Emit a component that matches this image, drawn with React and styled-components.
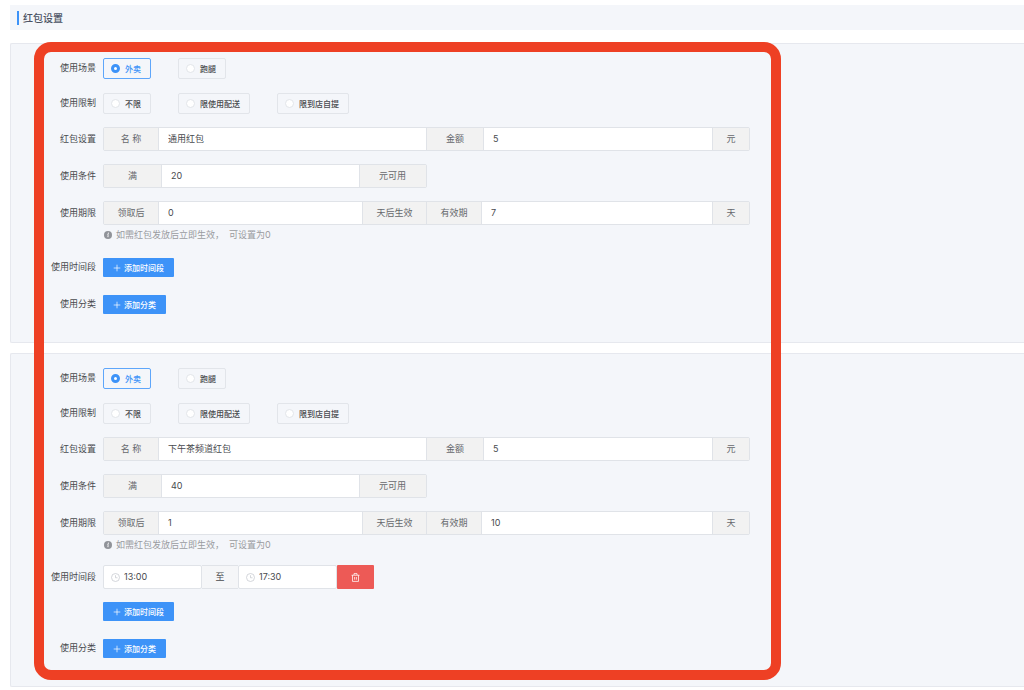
import React, { useId } from "react";
import styled, { createGlobalStyle } from "styled-components";

const GlobalStyle = createGlobalStyle`
    * {
        box-sizing: border-box;
    }
    body {
        margin: 0;
        background-color: #fff;
        color: #484a4e;
        font-family: Inter, "Noto Sans CJK SC", sans-serif;
        font-size: 9px;
        line-height: 14px;
    }
    input,
    button {
        font-family: inherit;
    }
`;

const Page = styled.main`
    padding: 5px 0 3px 10px;
`;

const TitleBar = styled.header`
    display: flex;
    align-items: center;
    height: 25px;
    margin-bottom: 13px;
    padding-left: 7px;
    background-color: #f4f6fa;
`;

const Title = styled.h1`
    margin: 0;
    padding-left: 4px;
    border-left: 2px solid #3d93f8;
    color: #4b5263;
    font-size: 10px;
    font-weight: 500;
    line-height: 14px;
`;

const Cards = styled.div`
    position: relative;
    display: flex;
    flex-direction: column;
    gap: 10px;
`;

const Highlight = styled.div`
    position: absolute;
    top: -1px;
    bottom: 7px;
    left: 24px;
    width: 747px;
    border: 10px solid #ee4024;
    border-radius: 17px;
    pointer-events: none;
`;

const Card = styled.section`
    display: flex;
    flex-direction: column;
    gap: 13px;
    padding: 13px 0 26px;
    border: 1px solid #e6e8ee;
    border-right: 0;
    border-radius: 2px 0 0 2px;
    background-color: #f4f6fa;
`;

const Row = styled.div`
    display: flex;
    gap: 7px;
`;

const RowLabel = styled.span`
    width: 85px;
    flex-shrink: 0;
    text-align: right;
    line-height: ${(props) => props.$height || 24}px;
`;

const RowContent = styled.div`
    flex: 1;
    max-width: 647px;
`;

const Chips = styled.div`
    display: flex;
    gap: 27px;
    padding-top: 1px;
`;

const Chip = styled.label`
    display: flex;
    align-items: center;
    gap: 5px;
    height: 21px;
    padding: 0 9px 0 7px;
    border: 1px solid #e2e5ea;
    border-radius: 2px;
    font-size: 8px;
    font-weight: 500;
    white-space: nowrap;
    cursor: pointer;
    &:has(input:checked) {
        border-color: #5ea6fa;
        color: #3d93f8;
    }
`;

const Radio = styled.input`
    appearance: none;
    width: 9px;
    height: 9px;
    margin: 0;
    border: 1px solid #e2e5ea;
    border-radius: 50%;
    background-color: #fff;
    &:checked {
        border: 3px solid #3d93f8;
    }
`;

const Group = styled.div`
    display: flex;
    height: 24px;
    width: ${(props) => (props.$half ? "50%" : "100%")};
    border: 1px solid #e0e3e8;
    border-radius: 2px;
`;

const Part = styled.div`
    display: flex;
    flex: 1;
    min-width: 0;
    & + & {
        border-left: 1px solid #e0e3e8;
    }
`;

const Addon = styled.label`
    display: flex;
    align-items: center;
    justify-content: center;
    flex-shrink: 0;
    width: ${(props) => props.$width}px;
    background-color: #f2f2f2;
    color: #66686c;
    white-space: nowrap;
`;

const TextInput = styled.input`
    flex: 1;
    min-width: 0;
    padding: 0 9px 1px;
    border: solid #e0e3e8;
    border-width: 0 ${(props) => (props.$open ? 0 : 1)}px 0 1px;
    outline: none;
    background-color: #fff;
    color: #484a4e;
    font-size: 9px;
`;

const Hint = styled.p`
    display: flex;
    align-items: center;
    gap: 4px;
    height: 17px;
    margin: 0;
    padding: 3px 0 0 1px;
    color: #999b9f;
    white-space: pre;
`;

const AddButton = styled.button`
    display: flex;
    align-items: center;
    gap: 3px;
    height: 19px;
    margin: 3px 0 2px;
    padding: 0 10px;
    border: 0;
    border-radius: 1px;
    background-color: #3d93f8;
    color: #fff;
    font-size: 8px;
    font-weight: 500;
    cursor: pointer;
`;

const TimeRange = styled.div`
    display: flex;
    height: 24px;
    margin-bottom: 13px;
`;

const TimeBox = styled.label`
    display: flex;
    align-items: center;
    gap: 4px;
    width: 99px;
    padding-left: 7px;
    border: 1px solid #e0e3e8;
    border-radius: 2px;
    background-color: #fff;
    color: #c6c9cf;
`;

const TimeInput = styled.input`
    flex: 1;
    min-width: 0;
    padding: 0 0 1px;
    border: 0;
    outline: none;
    background: none;
    color: #484a4e;
    font-size: 9px;
`;

const TimeSeparator = styled.span`
    display: flex;
    align-items: center;
    justify-content: center;
    width: 36px;
    border: solid #e0e3e8;
    border-width: 1px 0;
    background-color: #f5f6f8;
`;

const DeleteButton = styled.button`
    display: flex;
    align-items: center;
    justify-content: center;
    width: 37px;
    padding: 0;
    border: 0;
    border-radius: 1px;
    background-color: #ed5a56;
    color: #fff;
    cursor: pointer;
`;

const PlusIcon = () => (
    <svg width="8" height="8" viewBox="0 0 8 8" stroke="currentColor" strokeWidth="0.7">
        <path d="M4 0.7v6.6M0.7 4h6.6" />
    </svg>
);

const InfoIcon = () => (
    <svg width="8" height="8" viewBox="0 0 16 16">
        <circle cx="8" cy="8" r="8" fill="#909399" />
        <circle cx="8.7" cy="4.3" r="1.3" fill="#fff" />
        <path
            d="M6.6 7.2h2L7.6 11.6c-.1.6.5.5 1.3-.1"
            fill="none"
            stroke="#fff"
            strokeWidth="1.6"
        />
    </svg>
);

const ClockIcon = () => (
    <svg width="9" height="9" viewBox="0 0 18 18" fill="none" stroke="currentColor" strokeWidth="1.5">
        <circle cx="9" cy="9" r="8" />
        <path d="M9 4.5V9.5H13" />
    </svg>
);

const TrashIcon = () => (
    <svg width="9" height="9" viewBox="0 0 18 18" fill="none" stroke="currentColor" strokeWidth="1.5">
        <path d="M1 4.5h16M6 4V1.2h6V4M3 4.5v12.3h12V4.5M7.2 8v5.3M10.8 8v5.3" />
    </svg>
);

const Field = ({ label, height, children }) => {
    const id = useId();
    return (
        <Row role="group" aria-labelledby={id}>
            <RowLabel id={id} $height={height}>
                {label}
            </RowLabel>
            <RowContent>{children}</RowContent>
        </Row>
    );
};

const RadioField = ({ label, options }) => {
    const name = useId();
    return (
        <Field label={label} height={22}>
            <Chips>
                {options.map((option) => (
                    <Chip key={option.text}>
                        <Radio type="radio" name={name} defaultChecked={option.checked} />
                        {option.text}
                    </Chip>
                ))}
            </Chips>
        </Field>
    );
};

const InputPart = ({ before, beforeWidth, value, after, afterWidth }) => {
    const id = useId();
    return (
        <Part>
            <Addon htmlFor={id} $width={beforeWidth}>
                {before}
            </Addon>
            <TextInput id={id} defaultValue={value} $open={!after} />
            {after && (
                <Addon htmlFor={id} $width={afterWidth}>
                    {after}
                </Addon>
            )}
        </Part>
    );
};

const TimeField = ({ label, value }) => (
    <TimeBox>
        <ClockIcon />
        <TimeInput aria-label={label} defaultValue={value} />
    </TimeBox>
);

const coupons = [
    { name: "通用红包", amount: "5", minimum: "20", delay: "0", days: "7", times: [] },
    {
        name: "下午茶频道红包",
        amount: "5",
        minimum: "40",
        delay: "1",
        days: "10",
        times: [{ start: "13:00", end: "17:30" }],
    },
];

const CouponCard = ({ coupon }) => (
    <Card>
        <RadioField
            label="使用场景"
            options={[{ text: "外卖", checked: true }, { text: "跑腿" }]}
        />
        <RadioField
            label="使用限制"
            options={[{ text: "不限" }, { text: "限使用配送" }, { text: "限到店自提" }]}
        />
        <Field label="红包设置">
            <Group>
                <InputPart before="名 称" beforeWidth={54} value={coupon.name} />
                <InputPart
                    before="金额"
                    beforeWidth={56}
                    value={coupon.amount}
                    after="元"
                    afterWidth={36}
                />
            </Group>
        </Field>
        <Field label="使用条件">
            <Group $half>
                <InputPart
                    before="满"
                    beforeWidth={57}
                    value={coupon.minimum}
                    after="元可用"
                    afterWidth={66}
                />
            </Group>
        </Field>
        <Field label="使用期限">
            <Group>
                <InputPart
                    before="领取后"
                    beforeWidth={54}
                    value={coupon.delay}
                    after="天后生效"
                    afterWidth={63}
                />
                <InputPart
                    before="有效期"
                    beforeWidth={54}
                    value={coupon.days}
                    after="天"
                    afterWidth={36}
                />
            </Group>
            <Hint>
                <InfoIcon />
                如需红包发放后立即生效，{"  "}可设置为0
            </Hint>
        </Field>
        <Field label="使用时间段">
            {coupon.times.map((time) => (
                <TimeRange key={time.start}>
                    <TimeField label="开始时间" value={time.start} />
                    <TimeSeparator>至</TimeSeparator>
                    <TimeField label="结束时间" value={time.end} />
                    <DeleteButton type="button" aria-label="删除">
                        <TrashIcon />
                    </DeleteButton>
                </TimeRange>
            ))}
            <AddButton type="button">
                <PlusIcon />
                添加时间段
            </AddButton>
        </Field>
        <Field label="使用分类">
            <AddButton type="button">
                <PlusIcon />
                添加分类
            </AddButton>
        </Field>
    </Card>
);

const App = () => {
    return (
        <>
            <GlobalStyle />
            <Page>
                <TitleBar>
                    <Title>红包设置</Title>
                </TitleBar>
                <Cards>
                    {coupons.map((coupon) => (
                        <CouponCard key={coupon.name} coupon={coupon} />
                    ))}
                    <Highlight />
                </Cards>
            </Page>
        </>
    );
};

export default App;
